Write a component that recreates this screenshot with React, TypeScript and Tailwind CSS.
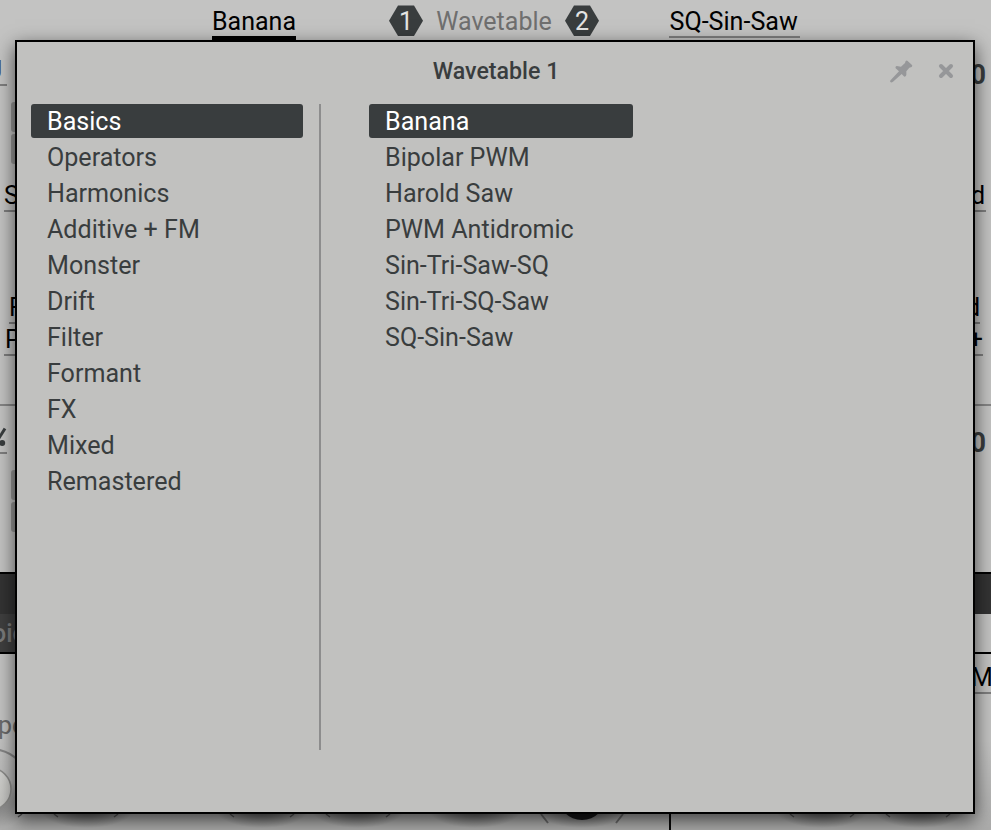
import { useState } from 'react';
import clsx from 'clsx';

const categories: Record<string, string[]> = {
  Basics: ['Banana', 'Bipolar PWM', 'Harold Saw', 'PWM Antidromic', 'Sin-Tri-Saw-SQ', 'Sin-Tri-SQ-Saw', 'SQ-Sin-Saw'],
  Operators: [],
  Harmonics: [],
  'Additive + FM': [],
  Monster: [],
  Drift: [],
  Filter: [],
  Formant: [],
  FX: [],
  Mixed: [],
  Remastered: [],
};

const Hex = ({ label }: { label: string }) => (
  <svg width="34" height="32" viewBox="0 0 34 32" className="mt-[5px] shrink-0">
    <path d="M9 0.5H25L34 15.7L25 31H9L0 15.7Z" fill="#393d3e" />
    <text x="17" y="25" textAnchor="middle" fontSize="25" fill="#e4e4e3">{label}</text>
  </svg>
);

// Value with an underline, as used all over the synth panel
const Param = ({ text, className }: { text: string; className?: string }) => (
  <div className={clsx('h-8 shrink-0 whitespace-nowrap border-b-2 border-[#7e7e7e] leading-[32px]', className)}>{text}</div>
);

const Buttons = () => (
  <div className="ml-[11px] flex w-12 flex-col gap-0.5">
    <div className="h-[30px] rounded-[3px] bg-[#969695]" />
    <div className="h-[30px] rounded-[3px] bg-[#969695]" />
  </div>
);

const Knobs = () => (
  <svg width="991" height="176" viewBox="0 654 991 176" className="col-span-2 col-start-1 row-start-1">
    <defs>
      <radialGradient id="shade">
        <stop offset="0" stopColor="#000" stopOpacity="0.6" />
        <stop offset="0.5" stopColor="#000" stopOpacity="0.3" />
        <stop offset="1" stopColor="#000" stopOpacity="0" />
      </radialGradient>
      <linearGradient id="cap" x1="0" y1="0" x2="0" y2="1">
        <stop offset="0" stopColor="#d2d2cf" />
        <stop offset="1" stopColor="#c2c2bf" />
      </linearGradient>
      <linearGradient id="floor" x1="0" y1="0" x2="0" y2="1">
        <stop offset="0" stopColor="#000" stopOpacity="0" />
        <stop offset="1" stopColor="#000" stopOpacity="0.12" />
      </linearGradient>
    </defs>
    <rect x="0" y="740" width="991" height="90" fill="url(#floor)" />
    {[87, 262, 358, 475, 582, 822, 920].map((x) => (
      <ellipse key={x} cx={x} cy="808" rx="48" ry="20" fill="url(#shade)" />
    ))}
    <ellipse cx="-6" cy="803" rx="32" ry="26" fill="url(#shade)" opacity="0.5" />
    <path d="M-10 749A41 41 0 0 1 31 790" fill="none" stroke="#858585" strokeWidth="2" />
    <circle cx="-10" cy="789" r="21" fill="url(#cap)" stroke="#8c8c8a" strokeWidth="1.5" />
    <circle cx="582" cy="796" r="24" fill="#171718" />
    <path d="M541 814L548 823M623 814L616 823" stroke="#6b6b6b" strokeWidth="2" />
    <path
      d="M22 814l-4 3M54 814l4 3M118 814l-4 3M230 814l4 3M294 814l-4 3M326 814l4 3M390 814l-4 3M790 814l4 3M854 814l-4 3M886 814l4 3M950 814l-4 3"
      stroke="#555"
      strokeWidth="1.5"
    />
    <path d="M670 654V830" stroke="#080808" strokeWidth="2" />
  </svg>
);

const ListItem = ({ label, active, onClick }: { label: string; active: boolean; onClick: () => void }) => (
  <button
    onClick={onClick}
    className={clsx(
      'h-[34px] rounded-[3px] pl-4 pt-0.5 text-left text-[25.1px] leading-[32px]',
      active ? 'bg-[#393d3e] text-white' : 'text-[#393d3e]'
    )}
  >
    {label}
  </button>
);

const WavetableBrowser = () => {
  const [category, setCategory] = useState('Basics');
  const [table, setTable] = useState('Banana');

  return (
    <div className="absolute left-[15px] top-10 flex h-[774px] w-[960px] flex-col border-2 border-black bg-[#c1c1bf] shadow-[0_6px_18px_rgba(0,0,0,0.65)]">
      <div className="grid h-[62px] shrink-0 grid-cols-[1fr_auto_1fr] items-center text-[#393d3e]">
        <h2 className="col-start-2 pb-[5px] pl-0.5 text-[23.2px] font-medium leading-[30px]">Wavetable 1</h2>
        <div className="flex items-center justify-end gap-[25px] pb-1 pr-5 text-[#969799]">
          <svg width="23" height="23" viewBox="0 0 69 69" fill="currentColor">
            <path d="M47 3Q50 0 53 3L66 15Q68 18 65 21L58 23L49 34L49 45Q48 50 43 50L35 42L9 65Q4 69 1 66Q-1 63 3 59L27 34L17 25Q15 20 20 18L33 20L45 9Z" />
          </svg>
          <svg width="16" height="16" viewBox="0 0 16 16" className="-mr-px" stroke="currentColor" strokeWidth="4" strokeLinecap="round">
            <path d="M3 3L13 13M13 3L3 13" />
          </svg>
        </div>
      </div>
      <div className="flex h-[646px] pl-3.5">
        <div className="flex w-[272px] flex-col gap-0.5">
          {Object.keys(categories).map((name) => (
            <ListItem key={name} label={name} active={name === category} onClick={() => setCategory(name)} />
          ))}
        </div>
        <div className="ml-4 w-0.5 bg-[#8d8d8d]" />
        <div className="ml-12 flex w-[264px] flex-col gap-0.5">
          {categories[category].map((name) => (
            <ListItem key={name} label={name} active={name === table} onClick={() => setTable(name)} />
          ))}
        </div>
      </div>
    </div>
  );
};

const App = () => {
  return (
    <div className="relative h-[830px] w-[991px] overflow-hidden bg-[#c3c3c2] font-['Roboto',sans-serif] text-[25px] text-black">
      <div className="flex h-[54px] items-start">
        <div className="ml-[212px] mt-1.5 h-[34px] w-[84px] border-b-4 border-black leading-[32px]">Banana</div>
        <div className="ml-[93px] flex w-[210px] justify-between">
          <Hex label="1" />
          <span className="mt-1.5 leading-[32px] text-[#6f6f6f]">Wavetable</span>
          <Hex label="2" />
        </div>
        <Param text="SQ-Sin-Saw" className="ml-[69.5px] mt-1.5 w-[131px] pl-px text-[25.1px]" />
      </div>

      {/* Oscillator section */}
      <div className="flex h-[350px] justify-between border-b-2 border-[#858585] box-content">
        <div className="flex w-12 flex-col">
          <Param text="U" className="flex w-[7px] justify-end pr-[5px] pt-px font-bold text-[#393d3e]" />
          <div className="mt-4"><Buttons /></div>
          <Param text="Saw" className="ml-1 mt-4" />
          <Param text="F" className="ml-[9px] mt-20" />
          <Param text="PM" className="ml-1 pl-px" />
        </div>
        <div className="flex w-12 flex-col items-end text-right">
          <Param text="0" className="border-transparent pr-[5px] pt-[5px] text-[27px] font-bold text-[#393d3e]" />
          <Param text="Mid" className="mr-[5px] mt-[94px] pr-px" />
          <Param text="d" className="mr-[11px] mt-20" />
          <Param text="+" className="mr-2" />
        </div>
      </div>

      {/* Second oscillator row */}
      <div className="flex h-[166px] justify-between">
        <div className="w-12 pt-4">
          <div className="h-8 w-[7px] border-b-2 border-[#7e7e7e]">
            <svg width="7" height="30" viewBox="0 0 7 30">
              <path d="M5 6.5L-6 24" stroke="#393d3e" strokeWidth="3" />
              <circle cx="2.2" cy="21" r="3" fill="#393d3e" />
            </svg>
          </div>
          <div className="mt-4"><Buttons /></div>
        </div>
        <div className="w-12 pr-[5px] pt-[21px] text-right text-[27px] font-bold leading-[32px] text-[#393d3e]">0</div>
      </div>

      {/* Mod strip */}
      <div className="h-[82px] border-y-2 border-black">
        <div className="h-10 bg-[#333333]" />
        <div className="-ml-3 h-[38px] w-[200px] bg-[#3f3f3f] pl-1 font-medium leading-[40px] text-[#7b7b7b]">oice</div>
      </div>

      <div className="grid h-44 grid-cols-2">
        <Knobs />
        <div className="col-start-1 row-start-1 -ml-0.5 pt-[57px] leading-[30px] text-[#6b6b6b]">peed</div>
        <div className="col-start-2 row-start-1 flex justify-end pt-2">
          <Param text="Mix" className="w-[20px]" />
        </div>
      </div>

      <WavetableBrowser />
    </div>
  );
};

export default App;
